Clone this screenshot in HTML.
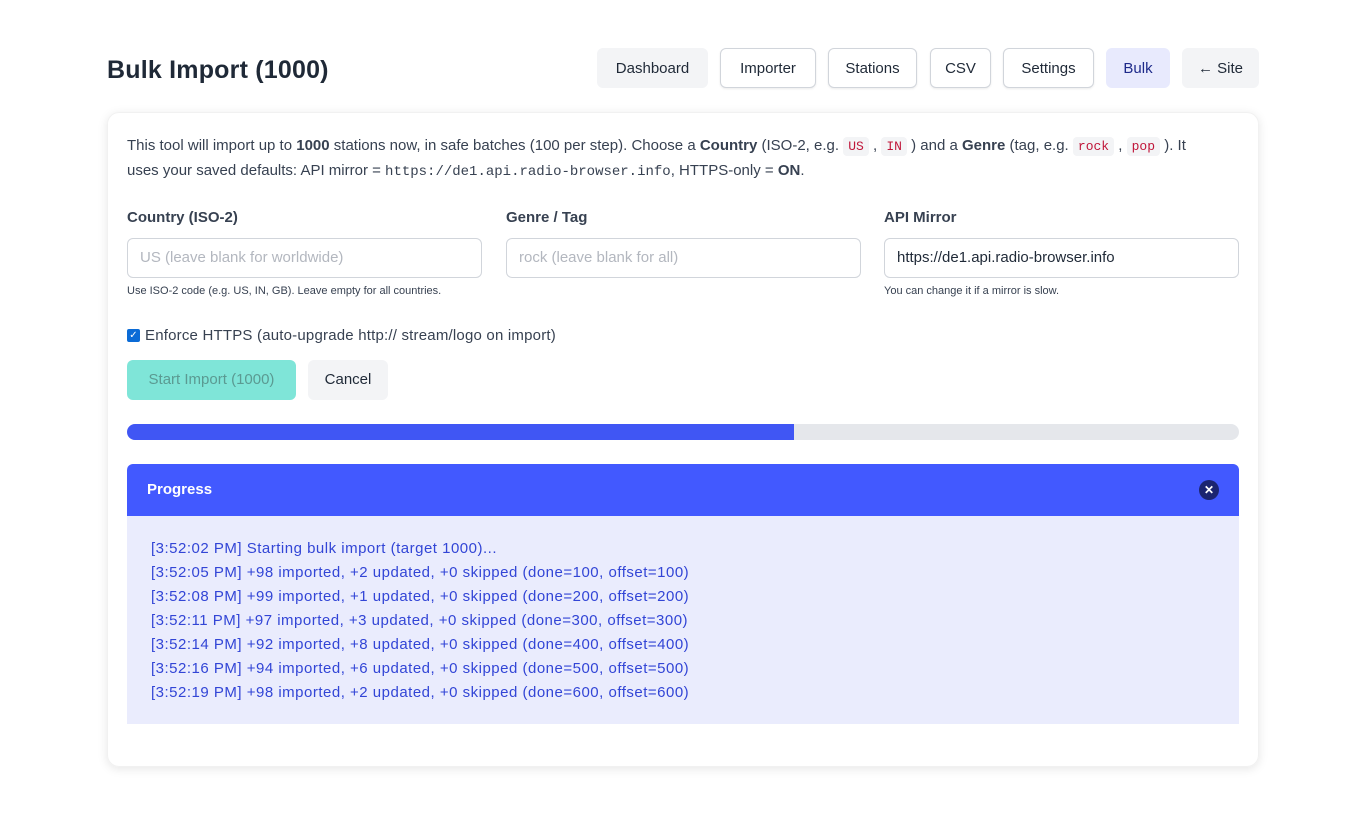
<!DOCTYPE html>
<html><head><style>
*{box-sizing:border-box}
body{margin:0;background:#fff;font-family:"Liberation Sans",sans-serif;color:#1f2937;width:1366px;height:815px;overflow:hidden}
.wrap{position:absolute;left:107px;width:1152px;top:0}
h1{position:absolute;left:0;top:54px;margin:0;font-size:25px;font-weight:bold;color:#1f2937;line-height:32px;letter-spacing:0.2px}
.nav span{position:absolute;top:48px;height:40px;line-height:40px;text-align:center;border-radius:6px;font-size:15px;color:#1f2937;background:#f3f4f6;border:1px solid #f3f4f6}
.nav span.o{background:#fff;border:1px solid #d1d5db;box-shadow:0 1px 2px rgba(0,0,0,.08)}
.nav span.b{background:#e8eafd;border-color:#e8eafd;color:#1e2a8a}
.card{position:absolute;top:112px;left:0;width:1152px;height:655px;border-radius:12px;box-shadow:0 2px 10px rgba(0,0,0,.1);border:1px solid #f1f1f1}
.intro{position:absolute;left:19px;top:21px;width:1120px;font-size:15px;line-height:24px;color:#374151}
code{font-family:"Liberation Mono",monospace;font-size:13px}
code.c{color:#c0163a;background:#f3f4f6;padding:2px 5px;border-radius:4px}
.f{position:absolute;top:96px;width:355px}
.f label{display:block;font-size:15px;font-weight:bold;color:#374151;height:20px}
.f .in{margin-top:9px;height:40px;border:1px solid #d1d5db;border-radius:6px;padding:0 12px;line-height:38px;font-size:15px;color:#b3b7bf}
.f .h{font-size:11px;color:#374151;margin-top:7px}
.chk{position:absolute;left:19px;top:214px;font-size:15px;color:#374151;display:flex;align-items:center;gap:5px;letter-spacing:0.2px}
.box{width:13px;height:13px;background:#0b6bd6;border-radius:2px;color:#fff;font-size:10px;line-height:13px;text-align:center}
.btn{position:absolute;top:247px;height:40px;line-height:40px;border-radius:6px;font-size:15px;text-align:center}
.bar{position:absolute;left:19px;top:311px;width:1112px;height:16px;background:#e5e7eb;border-radius:8px;overflow:hidden}
.bar div{width:667px;height:16px;background:#4056f4}
.ph{position:absolute;left:19px;top:351px;width:1112px;height:52px;background:#4259ff;border-radius:6px 6px 0 0;color:#fff;font-weight:bold;font-size:15px;line-height:52px;padding-left:20px}
.x{position:absolute;right:20px;top:16px;width:20px;height:20px;border-radius:50%;background:#1b2470;color:#fff;font-size:12px;line-height:20px;text-align:center}
.pb{position:absolute;left:19px;top:403px;width:1112px;height:208px;background:#eaecfd;padding:21px 24px;font-size:15px;line-height:24px;color:#3245d6;letter-spacing:0.5px}
</style></head><body>
<div class="wrap">
<h1>Bulk Import (1000)</h1>
<div class="nav"><span style="left:490px;width:111px">Dashboard</span><span class="o" style="left:613px;width:96px">Importer</span><span class="o" style="left:721px;width:89px">Stations</span><span class="o" style="left:823px;width:61px">CSV</span><span class="o" style="left:896px;width:91px">Settings</span><span class="b" style="left:999px;width:64px">Bulk</span><span style="left:1075px;width:77px">← Site</span></div>
<div class="card">
<div class="intro">This tool will import up to <b>1000</b> stations now, in safe batches (100 per step). Choose a <b>Country</b> (ISO-2, e.g. <code class="c">US</code> , <code class="c">IN</code> ) and a <b>Genre</b> (tag, e.g. <code class="c">rock</code> , <code class="c">pop</code> ). It<br>uses your saved defaults: API mirror = <code style="font-size:14px">https://de1.api.radio-browser.info</code>, HTTPS-only = <b>ON</b>.</div>
<div class="f" style="left:19px"><label>Country (ISO-2)</label><div class="in">US (leave blank for worldwide)</div><div class="h">Use ISO-2 code (e.g. US, IN, GB). Leave empty for all countries.</div></div>
<div class="f" style="left:398px"><label>Genre / Tag</label><div class="in">rock (leave blank for all)</div></div>
<div class="f" style="left:776px"><label>API Mirror</label><div class="in" style="color:#1f2937">https://de1.api.radio-browser.info</div><div class="h">You can change it if a mirror is slow.</div></div>
<div class="chk"><div class="box">✓</div>Enforce HTTPS (auto-upgrade http:// stream/logo on import)</div>
<div class="btn" style="left:19px;width:169px;background:#7fe5d8;color:#5b9a92">Start Import (1000)</div>
<div class="btn" style="left:200px;width:80px;background:#f3f4f6;color:#1f2937">Cancel</div>
<div class="bar"><div></div></div>
<div class="ph">Progress<div class="x">✕</div></div>
<div class="pb">[3:52:02 PM] Starting bulk import (target 1000)...<br>[3:52:05 PM] +98 imported, +2 updated, +0 skipped (done=100, offset=100)<br>[3:52:08 PM] +99 imported, +1 updated, +0 skipped (done=200, offset=200)<br>[3:52:11 PM] +97 imported, +3 updated, +0 skipped (done=300, offset=300)<br>[3:52:14 PM] +92 imported, +8 updated, +0 skipped (done=400, offset=400)<br>[3:52:16 PM] +94 imported, +6 updated, +0 skipped (done=500, offset=500)<br>[3:52:19 PM] +98 imported, +2 updated, +0 skipped (done=600, offset=600)</div>
</div>
</div>
</body></html>
